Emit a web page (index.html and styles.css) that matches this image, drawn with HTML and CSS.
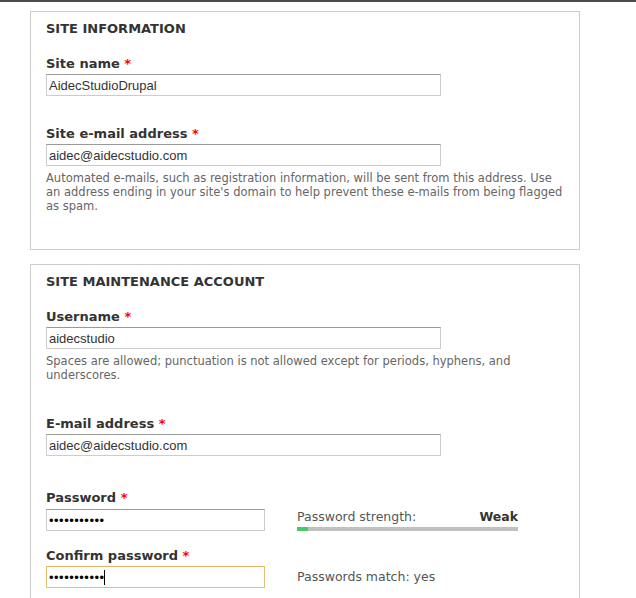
FILE: index.html
```html
<!DOCTYPE html>
<html>
<head>
<meta charset="utf-8">
<link rel="stylesheet" href="styles.css">
</head>
<body>
<div class="topbar"></div>
<div class="page">
  <div class="panel">
    <div class="panel-title">Site information</div>
    <div class="field field-gap">
      <label class="label">Site name <span class="req">*</span></label>
      <input class="text" type="text" value="AidecStudioDrupal">
    </div>
    <div class="field">
      <label class="label">Site e-mail address <span class="req">*</span></label>
      <input class="text" type="text" value="aidec@aidecstudio.com">
      <div class="desc">Automated e-mails, such as registration information, will be sent from this address. Use an address ending in your site's domain to help prevent these e-mails from being flagged as spam.</div>
    </div>
  </div>
  <div class="panel panel-second">
    <div class="panel-title">Site maintenance account</div>
    <div class="field field-gap-lg">
      <label class="label">Username <span class="req">*</span></label>
      <input class="text" type="text" value="aidecstudio">
      <div class="desc">Spaces are allowed; punctuation is not allowed except for periods, hyphens, and underscores.</div>
    </div>
    <div class="field field-gap-lg">
      <label class="label">E-mail address <span class="req">*</span></label>
      <input class="text" type="text" value="aidec@aidecstudio.com">
    </div>
    <div class="field field-gap-sm">
      <label class="label label-pw">Password <span class="req">*</span></label>
      <div class="pw-row">
        <input class="text text-short" type="password" value="aidecstudio">
        <div class="strength">
          <div class="strength-head">
            <span>Password strength:</span>
            <span class="strength-value">Weak</span>
          </div>
          <div class="strength-bar"><div class="strength-fill" style="width: 11px"></div></div>
        </div>
      </div>
    </div>
    <div class="field">
      <label class="label">Confirm password <span class="req">*</span></label>
      <div class="pw-row">
        <div class="focus-wrap">
          <input class="text text-short text-focus" type="password" value="aidecstudio">
          <span class="caret"></span>
        </div>
        <div class="match">Passwords match: <span class="match-ok">yes</span></div>
      </div>
    </div>
  </div>
</div>
</body>
</html>
```
FILE: styles.css
```css
html, body {
  margin: 0;
  padding: 0;
  background: #fff;
}
body {
  font-family: "DejaVu Sans", Verdana, sans-serif;
  color: #333;
}
.topbar {
  height: 2px;
  background: #4b4b47;
}
.page {
  padding: 9px 0 0 30px;
}
.panel {
  box-sizing: border-box;
  width: 550px;
  border: 1px solid #ccc;
  padding: 9px 12px 36px 15px;
}
.panel-second {
  margin-top: 14px;
  padding-bottom: 40px;
}
.panel-title {
  font-size: 13px;
  font-weight: bold;
  line-height: 16px;
  text-transform: uppercase;
  margin-bottom: 19px;
}
.field-gap {
  margin-bottom: 30px;
}
.field-gap-lg {
  margin-bottom: 34px;
}
.field-gap-sm {
  margin-bottom: 17px;
}
.label {
  display: block;
  font-size: 13px;
  font-weight: bold;
  line-height: 16px;
  margin-bottom: 2px;
}
.label-pw {
  margin-bottom: 3px;
}
.req {
  color: #f00;
}
.text {
  display: block;
  box-sizing: border-box;
  width: 395px;
  height: 22px;
  margin: 0;
  padding: 0 2px;
  border: 1px solid #ccc;
  border-top-color: #999;
  font-family: "Liberation Sans", Arial, sans-serif;
  font-size: 13px;
  color: #333;
  background: #fff;
  outline: none;
}
.text-short {
  width: 219px;
  letter-spacing: 0.5px;
  color: #000;
}
.text-focus {
  border-color: #e0c070;
  border-top-color: #d8b65e;
}
.desc {
  margin-top: 5px;
  font-size: 11.5px;
  line-height: 14px;
  color: #666;
}
.pw-row {
  display: flex;
  align-items: flex-start;
}
.strength {
  margin-left: 32px;
  width: 221px;
}
.strength-head {
  display: flex;
  justify-content: space-between;
  font-size: 12.5px;
  line-height: 16px;
  color: #555;
}
.strength-value {
  font-weight: bold;
  color: #333;
}
.strength-bar {
  margin-top: 2px;
  height: 4px;
  background: #c0c0c0;
}
.strength-fill {
  height: 4px;
  background: #47c965;
}
.focus-wrap {
  position: relative;
}
.caret {
  position: absolute;
  left: 58px;
  top: 4px;
  width: 1px;
  height: 15px;
  background: #000;
}
.match {
  margin-left: 32px;
  margin-top: 3px;
  font-size: 12.5px;
  line-height: 16px;
  color: #555;
}
```
